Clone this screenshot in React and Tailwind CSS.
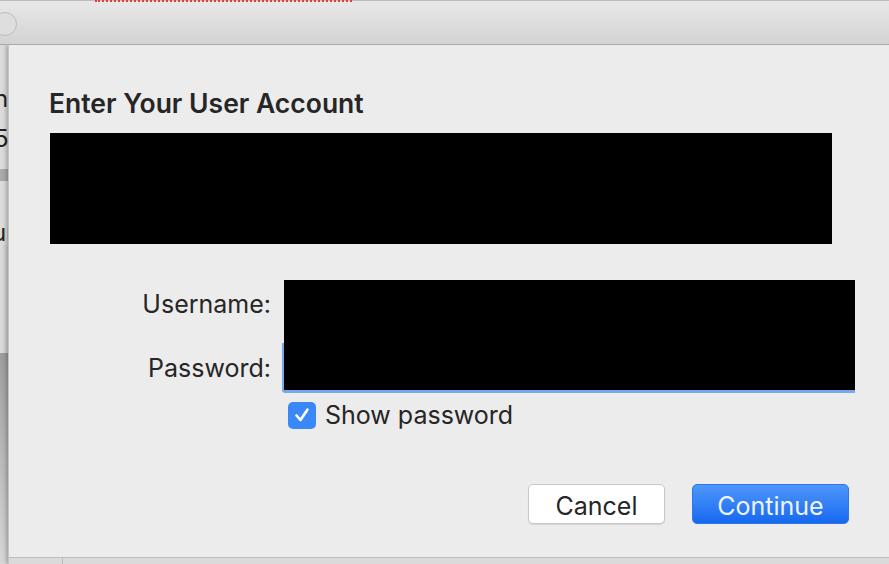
import { useState } from "react";

const font = { fontFamily: "Inter, 'Liberation Sans', sans-serif" };

const App = () => {
  const [show, setShow] = useState(true);

  return (
    <div className="w-[889px] h-[564px] overflow-hidden bg-[#d9d9d9] flex flex-col" style={font}>
      {/* title bar of the window behind */}
      <div className="relative h-[45px] shrink-0 bg-gradient-to-b from-[#e8e8e8] to-[#d3d3d3] border-t border-t-[#bdbdbd] border-b border-b-[#a9a9a9]">
        <div className="absolute left-[95px] top-[-1px] w-[257px] border-t-2 border-dotted border-[#e23c3c]" />
        <div className="absolute left-[-7px] top-[11px] w-[24px] h-[24px] rounded-full border border-[#bcbcbc] bg-[#dedede]" />
      </div>

      <div className="flex flex-1 min-h-0">
        {/* sliver of the window behind */}
        <div className="w-[8px] shrink-0 flex flex-col bg-[#dcdcdc] overflow-hidden text-[24px] text-[#222] leading-none">
          <div className="h-[42px]" />
          <div className="-ml-[6px]">n</div>
          <div className="h-[16px]" />
          <div className="-ml-[6px]">5</div>
          <div className="h-[18px]" />
          <div className="h-[12px] bg-[#ababab]" />
          <div className="h-[40px]" />
          <div className="-ml-[8px]">ur</div>
          <div className="h-[108px] bg-gradient-to-r from-[#dcdcdc] to-[#d0d0d0]" />
          <div className="flex-1 bg-gradient-to-b from-[#9d9d9d] to-[#d8d8d8]" />
        </div>

        {/* sheet */}
        <div className="flex-1 flex flex-col bg-[#ececec] shadow-[-2px_0_4px_rgba(0,0,0,0.25)] border-l border-[#c4c4c4]">
          <div className="flex-1 flex flex-col pl-[40px] pr-[33px]">
            <h1 className="mt-[42px] text-[26.5px] leading-[32px] font-semibold text-[#262626]">
              Enter Your User Account
            </h1>
            {/* redacted message */}
            <div className="mt-[14px] ml-[1px] h-[111px] w-[782px] bg-black" />

            <div className="mt-[36px] flex flex-col">
              <div className="flex items-start">
                <label className="w-[222px] text-right text-[25px] leading-[30px] pt-[9px] text-[#262626]">Username:</label>
                <div className="ml-[13px] w-[571px] h-[63px] bg-black" />
              </div>
              <div className="flex items-start">
                <label className="w-[222px] text-right text-[25px] leading-[30px] pt-[10px] text-[#262626]">Password:</label>
                <div className="ml-[11px] w-[573px] h-[50px] bg-black border-l-2 border-b-[3px] border-[#74a9ef] rounded-bl-[3px]" />
              </div>
              <label className="ml-[239px] mt-[7px] flex items-center gap-[9px] cursor-pointer" onClick={() => setShow(!show)}>
                <span className={`w-[28px] h-[27px] rounded-[5px] flex items-center justify-center ${show ? "bg-[#3a87f7]" : "bg-white border border-[#aaa]"}`}>
                  {show && (
                    <svg width="18" height="18" viewBox="0 0 18 18">
                      <path d="M3.5 9.5 L7.5 14 L14.5 3.5" fill="none" stroke="white" strokeWidth="2.6" strokeLinecap="round" strokeLinejoin="round" />
                    </svg>
                  )}
                </span>
                <span className="text-[25px] leading-[30px] text-[#262626]">Show password</span>
              </label>
            </div>

            <div className="mt-[54px] flex justify-end gap-[27px] pr-[7px]">
              <button className="w-[137px] h-[40px] pt-[4px] rounded-[5px] bg-white border border-[#c8c8c8] shadow-[0_1px_1px_rgba(0,0,0,0.1)] text-[25px] leading-[30px] text-[#262626]">
                Cancel
              </button>
              <button className="w-[157px] h-[40px] pt-[4px] rounded-[5px] bg-gradient-to-b from-[#4e96fb] to-[#1468ef] border border-[#2d76ea] text-[25px] leading-[30px] text-[#eef4ff]">
                Continue
              </button>
            </div>
          </div>
          <div className="h-[7px] shrink-0 bg-[#dadada] border-t border-[#bdbdbd] relative">
            <div className="absolute left-[53px] top-0 h-full w-[1px] bg-[#bcbcbc]" />
          </div>
        </div>
      </div>
    </div>
  );
};

export default App;
